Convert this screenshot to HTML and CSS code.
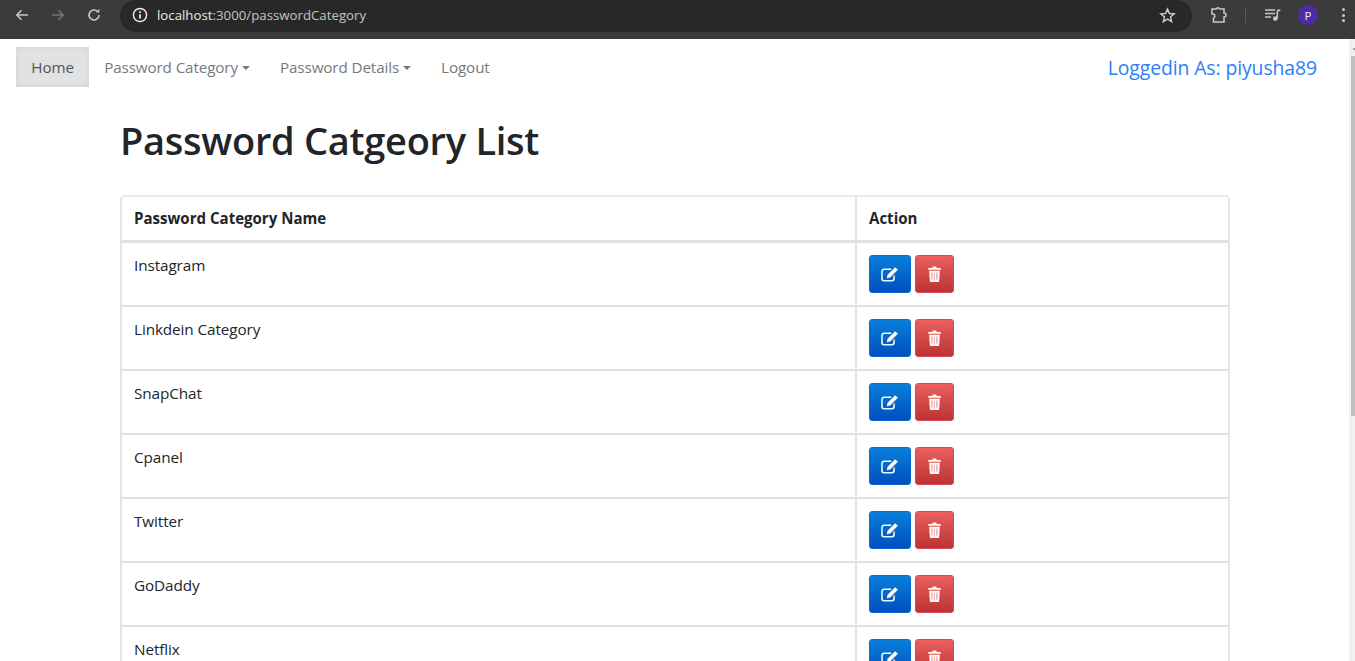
FILE: index.html
```html
<!DOCTYPE html>
<html lang="en">
<head>
<meta charset="utf-8">
<title>Password Category</title>
<link rel="stylesheet" href="styles.css">
</head>
<body>
<header class="chrome">
  <div class="chrome-nav">
    <svg class="ci" viewBox="0 0 16 16"><path d="M14 8H3M7.5 3.2 2.8 8l4.7 4.8" class="s-light"/></svg>
    <svg class="ci" viewBox="0 0 16 16"><path d="M2 8h11M8.5 3.2 13.2 8l-4.7 4.8" class="s-dim"/></svg>
    <svg class="ci" viewBox="0 0 16 16"><path d="M13 8a5 5 0 1 1-1.5-3.6" class="s-light"/><path d="M13.4 1.8v3.6H9.8z" class="f-light"/></svg>
  </div>
  <div class="omnibox">
    <span class="site-badge"><svg class="info" viewBox="0 0 16 16"><circle cx="8" cy="8" r="6.6" class="s-white"/><path d="M8 7.2v4.2M8 4.3v1.6" class="s-white2"/></svg></span>
    <span class="url"><span class="url-host">localhost</span>:3000/passwordCategory</span>
    <svg class="star" viewBox="0 0 18 18"><path d="M9 2.2l2 4.6 5 .45-3.8 3.3 1.15 4.9L9 12.85l-4.35 2.6 1.15-4.9L2 7.25l5-.45z" class="s-light"/></svg>
  </div>
  <div class="chrome-tools">
    <svg class="ext" viewBox="0 0 18 18"><path d="M2 3h4.2a2 2 0 0 1 3.6 0H14v4a2 2 0 0 1 0 4v5H3.5v-4a2.2 2.2 0 0 0 0-4H2z" class="s-light"/></svg>
    <span class="sep"></span>
    <svg class="media" viewBox="0 0 16 16"><path d="M0.5 3h10M0.5 6.5h10M0.5 10h6" class="s-light"/><path d="M12.8 3.8V11.5M12.8 3.4h3" class="s-light"/><circle cx="10.8" cy="11.6" r="2.3" class="f-light"/></svg>
    <span class="avatar">P</span>
    <span class="kebab"><i></i><i></i><i></i></span>
  </div>
</header>

<div class="viewport">
  <main class="page">
    <nav class="navbar">
      <ul class="nav-list">
        <li class="nav-link active">Home</li>
        <li class="nav-link">Password Category<span class="caret"></span></li>
        <li class="nav-link">Password Details<span class="caret"></span></li>
        <li class="nav-link">Logout</li>
      </ul>
      <span class="login-as">Loggedin As: piyusha89</span>
    </nav>

    <section class="container">
      <h1 class="title">Password Catgeory List</h1>
      <div class="table-wrap">
        <table class="table">
          <thead>
            <tr><th class="col-name">Password Category Name</th><th>Action</th></tr>
          </thead>
          <tbody>
            <tr><td>Instagram</td><td class="actions"><button class="btn btn-edit"><svg class="i-edit" viewBox="0 0 18 16"><use href="#edit"/></svg></button><button class="btn btn-del"><svg class="i-del" viewBox="0 0 13 16"><use href="#trash"/></svg></button></td></tr>
            <tr><td>Linkdein Category</td><td class="actions"><button class="btn btn-edit"><svg class="i-edit" viewBox="0 0 18 16"><use href="#edit"/></svg></button><button class="btn btn-del"><svg class="i-del" viewBox="0 0 13 16"><use href="#trash"/></svg></button></td></tr>
            <tr><td>SnapChat</td><td class="actions"><button class="btn btn-edit"><svg class="i-edit" viewBox="0 0 18 16"><use href="#edit"/></svg></button><button class="btn btn-del"><svg class="i-del" viewBox="0 0 13 16"><use href="#trash"/></svg></button></td></tr>
            <tr><td>Cpanel</td><td class="actions"><button class="btn btn-edit"><svg class="i-edit" viewBox="0 0 18 16"><use href="#edit"/></svg></button><button class="btn btn-del"><svg class="i-del" viewBox="0 0 13 16"><use href="#trash"/></svg></button></td></tr>
            <tr><td>Twitter</td><td class="actions"><button class="btn btn-edit"><svg class="i-edit" viewBox="0 0 18 16"><use href="#edit"/></svg></button><button class="btn btn-del"><svg class="i-del" viewBox="0 0 13 16"><use href="#trash"/></svg></button></td></tr>
            <tr><td>GoDaddy</td><td class="actions"><button class="btn btn-edit"><svg class="i-edit" viewBox="0 0 18 16"><use href="#edit"/></svg></button><button class="btn btn-del"><svg class="i-del" viewBox="0 0 13 16"><use href="#trash"/></svg></button></td></tr>
            <tr><td>Netflix</td><td class="actions"><button class="btn btn-edit"><svg class="i-edit" viewBox="0 0 18 16"><use href="#edit"/></svg></button><button class="btn btn-del"><svg class="i-del" viewBox="0 0 13 16"><use href="#trash"/></svg></button></td></tr>
          </tbody>
        </table>
      </div>
    </section>
  </main>
  <div class="scrollbar"><span class="arrow"></span><span class="thumb"></span></div>
</div>

<svg class="defs" width="0" height="0">
  <symbol id="edit" viewBox="0 0 18 16">
    <path d="M13 9.5v3.3A1.9 1.9 0 0 1 11.1 14.7H2.9A1.9 1.9 0 0 1 1 12.8V5.2A1.9 1.9 0 0 1 2.9 3.3h7.3" fill="none" stroke="#fff" stroke-width="1.5"/>
    <path d="M14.2 1.2l2.6 2.6-7.6 7.6-3.4.8.8-3.4z" fill="#fff"/>
  </symbol>
  <symbol id="trash" viewBox="0 0 13 16">
    <path d="M.3 2h3.9L4.9.6h3.2L8.8 2h3.9v1.7H.3zM1.2 4.8h10.6l-.6 9.9a1.3 1.3 0 0 1-1.3 1.2H3.1a1.3 1.3 0 0 1-1.3-1.2z" fill="#fff"/>
    <path d="M4 6.6v7.2" stroke="#ef8f9a" stroke-width="1.1"/>
    <path d="M6.5 6.6v7.2" stroke="#f1b98a" stroke-width="1.1"/>
    <path d="M9 6.6v7.2" stroke="#e884b0" stroke-width="1.1"/>
  </symbol>
</svg>
</body>
</html>
```

FILE: styles.css
```css
* { box-sizing: border-box; }
html, body { margin: 0; padding: 0; height: 100%; overflow: hidden; }
body {
  background: #fff;
  font-family: "Open Sans", "Noto Sans", "Liberation Sans", sans-serif;
  color: #212529;
  display: flex;
  flex-direction: column;
}

/* Browser chrome */
.chrome {
  flex: 0 0 39px;
  height: 39px;
  background: #3b3b3b;
  display: flex;
  align-items: flex-start;
}
.chrome-nav {
  display: flex;
  gap: 20px;
  padding: 7px 0 0 14px;
  width: 120px;
}
.ci { width: 16px; height: 16px; }
.s-light { fill: none; stroke: #c7c7c7; stroke-width: 1.6; }
.s-dim { fill: none; stroke: #757575; stroke-width: 1.6; }
.s-white { fill: none; stroke: #e8e8e8; stroke-width: 1.5; }
.s-white2 { fill: none; stroke: #e8e8e8; stroke-width: 1.8; }
.f-light { fill: #c7c7c7; }
.omnibox {
  width: 1072px;
  height: 32px;
  background: #282828;
  border-radius: 16px;
  display: flex;
  align-items: center;
  padding: 0 16px 2px 9px;
}
.site-badge {
  width: 22px;
  height: 22px;
  display: flex;
  align-items: center;
  justify-content: center;
}
.info { width: 16px; height: 16px; }
.url {
  margin-left: 6px;
  font-size: 13.25px;
  color: #c4c4c4;
  flex: 1;
  white-space: nowrap;
}
.url-host { color: #ececec; }
.star { width: 17px; height: 17px; }
.chrome-tools {
  flex: 1;
  display: flex;
  align-items: center;
  height: 30px;
  padding-left: 18px;
}
.ext { width: 18px; height: 18px; }
.sep { width: 1px; height: 16px; background: #5c5c5c; margin: 0 18px 0 17px; }
.media { width: 17px; height: 16px; }
.avatar {
  width: 20px;
  height: 20px;
  margin-left: 17px;
  border-radius: 50%;
  background: #4f2ba5;
  color: #eee;
  font-size: 11.5px;
  display: flex;
  align-items: center;
  justify-content: center;
}
.kebab { margin-left: 24px; display: flex; flex-direction: column; gap: 2.5px; }
.kebab i { width: 3px; height: 3px; border-radius: 50%; background: #c7c7c7; display: block; }

/* Viewport */
.viewport { flex: 1; display: flex; min-height: 0; overflow: hidden; }
.page { flex: 1; min-width: 0; }
.scrollbar {
  flex: 0 0 6px;
  background: #f1f1f1;
  padding: 9px 0 0 2px;
}
.arrow { display: block; width: 2px; height: 2px; margin: 0 0 6px 2px; background: #a3a3a3; }
.thumb { display: block; height: 360px; width: 4px; background: #c1c1c1; }

/* Navbar */
.navbar {
  display: flex;
  align-items: center;
  justify-content: space-between;
  height: 56px;
  padding: 0 32px 0 16px;
}
.nav-list { display: flex; list-style: none; margin: 0; padding: 0; }
.nav-link {
  font-size: 15.2px;
  letter-spacing: -0.1px;
  line-height: 24px;
  padding: 8px 15px;
  height: 40px;
  color: #76797c;
  white-space: nowrap;
}
.nav-link.active {
  color: #51565b;
  background: #e2e2e2;
  padding: 8px 15.3px;
  box-shadow: inset 0 0 6px rgba(0, 0, 0, 0.08);
}
.caret {
  display: inline-block;
  margin-left: 4px;
  vertical-align: 3px;
  border-top: 4px solid #76797c;
  border-left: 4px solid transparent;
  border-right: 4px solid transparent;
}
.login-as { font-size: 19.4px; color: #2c7ef8; letter-spacing: -0.1px; }

/* Content */
.container { width: 1110px; margin: 0 0 0 120px; }
.title {
  margin: 0;
  padding-top: 20px;
  font-size: 38px;
  line-height: 50px;
  font-weight: 600;
  color: #212529;
  letter-spacing: -0.28px;
  height: 100px;
}
.table-wrap {
  border: 2px solid #e2e5e9;
  border-top-color: #e9ebee;
  border-bottom: 0;
  border-radius: 5px 5px 0 0;
}
.table { width: 100%; border-collapse: separate; border-spacing: 0; table-layout: fixed; font-size: 15.3px; }
.table th, .table td {
  padding: 12px;
  text-align: left;
  vertical-align: top;
  border-bottom: 2px solid #dee2e6;
}
.table tr > :first-child { border-right: 2px solid #dee2e6; }
.table thead th {
  border-bottom: 3px solid #dee2e6;
  padding-top: 11px;
  padding-bottom: 11px;
  font-size: 15.05px;
  font-weight: 700;
  height: 46px;
  line-height: 21px;
}
.table .col-name { width: 735px; }
.table td { height: 64px; line-height: 21px; letter-spacing: -0.1px; }
.actions { padding-bottom: 0; }
.btn {
  display: inline-flex;
  align-items: center;
  justify-content: center;
  height: 38px;
  padding: 0;
  border-radius: 3px;
  vertical-align: top;
}
.btn-edit {
  width: 42px;
  margin-right: 4px;
  background: linear-gradient(#0a7fd8, #004ec2);
  border: 1px solid #0a6ad4;
}
.btn-del {
  width: 39px;
  background: linear-gradient(#ea5f5f, #bd3333);
  border: 1px solid #d44a50;
}
.i-edit { width: 18px; height: 16px; }
.i-del { width: 13px; height: 16px; }
.defs { position: absolute; }
```
